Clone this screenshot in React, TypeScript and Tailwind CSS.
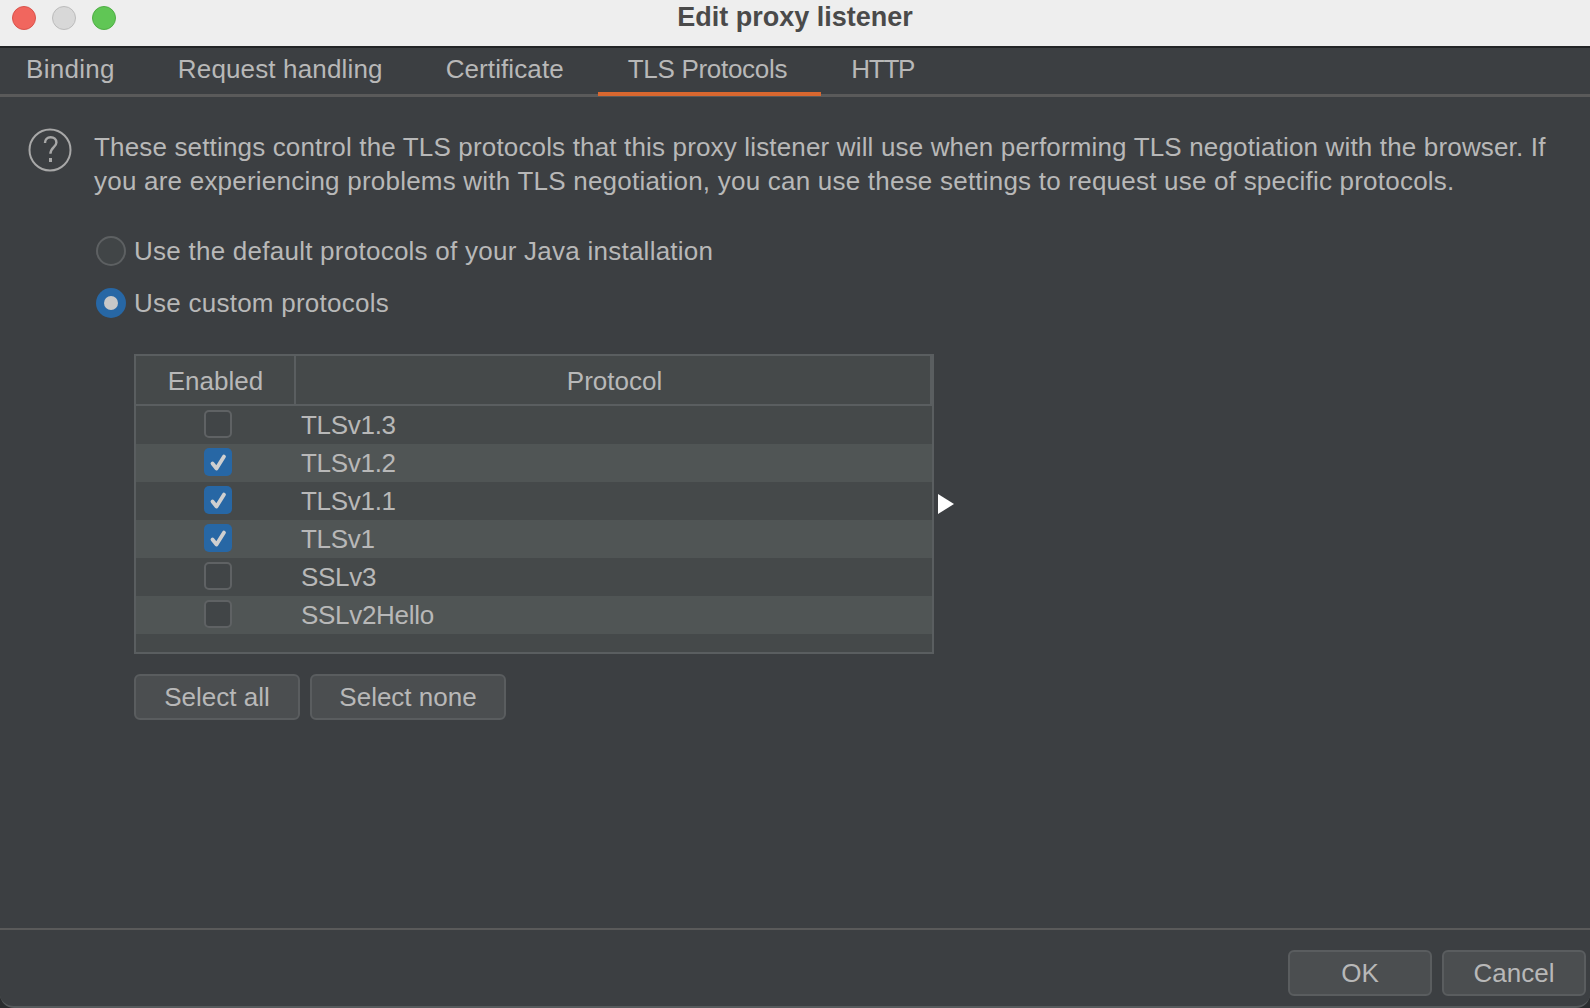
const tabs = [
  { label: "Binding", className: "pl-[26px] pr-[30px] tracking-[0.3px]" },
  { label: "Request handling", className: "ml-[3px] px-[30px] tracking-[0.15px]" },
  { label: "Certificate", className: "ml-[3px] px-[30px] tracking-[0.1px]" },
  { label: "TLS Protocols", className: "ml-[4px] pl-[30px] pr-[34px] tracking-[-0.3px] border-[#d8672f]", active: true },
  { label: "HTTP", className: "px-[30px] tracking-[-1.2px]" },
];

const protocols = [
  { name: "TLSv1.3", enabled: false },
  { name: "TLSv1.2", enabled: true },
  { name: "TLSv1.1", enabled: true },
  { name: "TLSv1", enabled: true },
  { name: "SSLv3", enabled: false },
  { name: "SSLv2Hello", enabled: false },
];

function Radio({ selected, label }: { selected: boolean; label: string }) {
  return (
    <div className="flex h-[30px] items-center">
      {selected ? (
        <span className="flex h-[30px] w-[30px] items-center justify-center rounded-full bg-[#2767a5]">
          <span className="h-[14px] w-[14px] rounded-full bg-[#c8c8c8]" />
        </span>
      ) : (
        <span className="h-[30px] w-[30px] rounded-full border-2 border-[#5d6062] bg-[#414547]" />
      )}
      <span className="ml-[8px] tracking-[0.25px]">{label}</span>
    </div>
  );
}

function Button({ label, className }: { label: string; className: string }) {
  return (
    <button className={`flex h-[46px] items-center justify-center rounded-[6px] border-2 border-[#5a5d5f] bg-[#4b4e50] ${className}`}>
      {label}
    </button>
  );
}

export default function App() {
  return (
    <div className="relative flex h-[1008px] w-[1590px] flex-col overflow-hidden bg-[#2a2c2e] font-['Liberation_Sans',sans-serif] text-[26px] text-[#b8b8b8]">
      {/* Title bar */}
      <div className="relative flex h-[46px] shrink-0 justify-center bg-[#eeeeee] pt-[1px]">
        <div className="absolute left-[12px] top-[6px] flex gap-[16px]">
          <span className="h-[24px] w-[24px] rounded-full border border-[#d9534c] bg-[#f1665e]" />
          <span className="h-[24px] w-[24px] rounded-full border border-[#bcbcbc] bg-[#d8d8d8]" />
          <span className="h-[24px] w-[24px] rounded-full border border-[#4fae45] bg-[#60c655]" />
        </div>
        <span className="text-[27px] leading-[32px] font-bold text-[#4a4a4a]">Edit proxy listener</span>
      </div>

      <div className="flex flex-1 flex-col rounded-b-[14px] border-t-2 border-b-2 border-t-[#222426] border-b-[#565a5c] bg-[#3c3f42]">
        {/* Tabs */}
        <div className="flex h-[49px] shrink-0 border-b-[3px] border-[#5a5a5a]">
          {tabs.map((tab) => (
            <div
              key={tab.label}
              className={`-mb-[2px] flex items-center border-b-4 pb-[2px] ${tab.active ? "" : "border-transparent"} ${tab.className}`}
            >
              {tab.label}
            </div>
          ))}
        </div>

        {/* Description */}
        <div className="mt-[33px] flex pl-[28px]">
          <svg width="44" height="44" viewBox="0 0 44 44" fill="none" className="-mt-[2px] shrink-0">
            <circle cx="22" cy="22" r="20.5" stroke="#a8a8a8" strokeWidth="2" />
            <path d="M17 15c0-3.6 2.2-5.8 5.6-5.8 3.5 0 5.8 2.2 5.8 5.2 0 4.6-6 5-6 11.4" stroke="#a8a8a8" strokeWidth="2.4" />
            <rect x="21" y="30" width="3" height="4" fill="#a8a8a8" />
          </svg>
          <p className="ml-[22px] leading-[34px] tracking-[0.16px]">
            These settings control the TLS protocols that this proxy listener will use when performing TLS negotiation with the browser. If
            <br />
            <span className="tracking-[0.22px]">you are experiencing problems with TLS negotiation, you can use these settings to request use of specific protocols.</span>
          </p>
        </div>

        {/* Protocol options */}
        <div className="mt-[38px] flex flex-col gap-[22px] pl-[96px]">
          <Radio selected={false} label="Use the default protocols of your Java installation" />
          <Radio selected label="Use custom protocols" />
        </div>

        {/* Protocol table */}
        <div className="ml-[134px] mt-[36px] flex h-[300px] w-[800px] flex-col border-2 border-[#5a5e60] bg-[#45494a]">
          <div className="flex h-[50px] shrink-0 border-b-2 border-[#5a5e60]">
            <div className="flex w-[160px] items-center justify-center border-r-2 border-[#5a5e60] pl-[1px] pt-[2px]">Enabled</div>
            <div className="flex flex-1 items-center justify-center border-r-2 border-[#5a5e60] pl-[3px] pt-[2px]">Protocol</div>
          </div>
          {protocols.map((protocol, i) => (
            <div key={protocol.name} className={`flex h-[38px] items-center ${i % 2 === 1 ? "bg-[#505555]" : ""}`}>
              <div className="flex w-[159px] justify-center pb-[2px] pl-[4px]">
                {protocol.enabled ? (
                  <span className="flex h-[28px] w-[28px] items-center justify-center rounded-[5px] bg-[#2767a5]">
                    <svg width="28" height="28" viewBox="0 0 28 28" fill="none">
                      <path d="M8.5 15.5L12.5 20.5L20 8.5" stroke="#cfcfcf" strokeWidth="3.8" strokeLinecap="round" strokeLinejoin="round" />
                    </svg>
                  </span>
                ) : (
                  <span className="h-[28px] w-[28px] rounded-[5px] border-2 border-[#5f6264] bg-[#414547]" />
                )}
              </div>
              <span className="ml-[6px] tracking-[-0.3px]">{protocol.name}</span>
            </div>
          ))}
        </div>

        <div className="ml-[134px] mt-[20px] flex gap-[10px]">
          <Button label="Select all" className="w-[166px]" />
          <Button label="Select none" className="w-[196px]" />
        </div>

        {/* Footer */}
        <div className="mt-auto flex h-[78px] shrink-0 justify-end gap-[10px] border-t-2 border-[#5a5a5a] pr-[4px] pt-[20px]">
          <Button label="OK" className="w-[144px]" />
          <Button label="Cancel" className="w-[144px]" />
        </div>
      </div>

      {/* Mouse cursor */}
      <svg width="17" height="20" viewBox="0 0 17 20" className="absolute left-[938px] top-[494px]">
        <path d="M0 0L16 10L0 20Z" fill="#ffffff" />
      </svg>
    </div>
  );
}
